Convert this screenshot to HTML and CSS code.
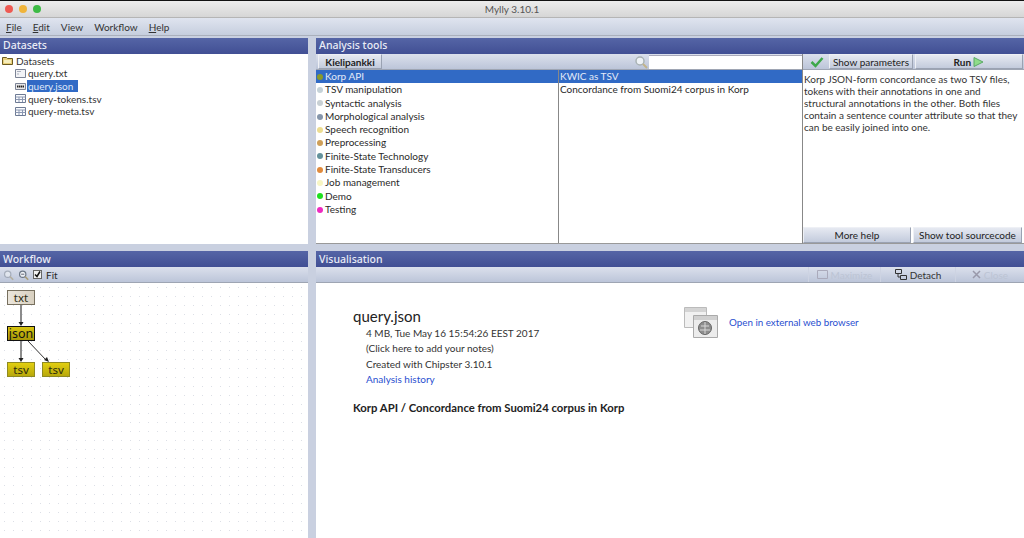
FILE: index.html
```html
<!DOCTYPE html>
<html lang="en">
<head>
    <meta charset="UTF-8">
    <title>Mylly 3.10.1</title>
    <link rel="stylesheet" href="styles.css">
</head>
<body>
    <div class="titlebar">
        <span class="light red"></span>
        <span class="light yellow"></span>
        <span class="light green"></span>
        <div class="wintitle">Mylly 3.10.1</div>
    </div>
    <div class="menubar">
        <span><u>F</u>ile</span>
        <span><u>E</u>dit</span>
        <span>View</span>
        <span>Workflow</span>
        <span><u>H</u>elp</span>
    </div>

    <div class="main">
        <section class="panel">
            <h2>Datasets</h2>
            <div class="tree">
                <div class="tree-root">
                    <svg width="11" height="9" viewBox="0 0 11 9"><path d="M.5 1.500h4l1 1h5v6H.5z" fill="#e8cf7a" stroke="#6b5a20"/><path d="M2 4h7v3H2z" fill="#f6eebd"/></svg>
                    Datasets
                </div>
                <div class="tree-item">
                    <svg class="file" width="11" height="9" viewBox="0 0 11 9"><path d="M.5.500h10v8H.5z" fill="#f2f3f6" stroke="#7c8496"/><path d="M2 2.500h4M2 5h2" stroke="#a9afbd"/></svg>
                    <span>query.txt</span>
                </div>
                <div class="tree-item">
                    <svg class="file" width="11" height="9" viewBox="0 0 11 9"><path d="M.5 1.500h10v6H.5z" fill="#e9e9ea" stroke="#7c8496"/><path d="M2 4.500h7" stroke="#222" stroke-width="2" stroke-dasharray="1.500 .5"/></svg>
                    <span class="picked">query.json</span>
                </div>
                <div class="tree-item">
                    <svg class="file" width="11" height="9" viewBox="0 0 11 9"><path d="M.5.500h10v8H.5z" fill="#fafbfd" stroke="#6d7a94"/><path d="M.5 3h10M.5 5.500h10M4 3v5M7.500 3v5" stroke="#8d99b3"/></svg>
                    <span>query-tokens.tsv</span>
                </div>
                <div class="tree-item">
                    <svg class="file" width="11" height="9" viewBox="0 0 11 9"><path d="M.5.500h10v8H.5z" fill="#fafbfd" stroke="#6d7a94"/><path d="M.5 3h10M.5 5.500h10M4 3v5M7.500 3v5" stroke="#8d99b3"/></svg>
                    <span>query-meta.tsv</span>
                </div>
            </div>
        </section>

        <section class="panel">
            <h2>Analysis tools</h2>
            <div class="tools">
                <div class="tools-left">
                    <div class="toolbar">
                        <button class="btn kieli">Kielipankki</button>
                        <svg class="search" width="14" height="14" viewBox="0 0 14 14"><circle cx="6" cy="6" r="4" fill="#eef2f6" stroke="#a9b2b4" stroke-width="1.500"/><path d="M9 9l4 4" stroke="#c2b48a" stroke-width="2"/></svg>
                        <div class="searchbox"></div>
                    </div>
                    <div class="lists">
                        <ul class="list cats">
                            <li class="active"><i style="background:#8a9a2a"></i>Korp API</li>
                            <li><i style="background:#c5d2d8"></i>TSV manipulation</li>
                            <li><i style="background:#c8d0d4"></i>Syntactic analysis</li>
                            <li><i style="background:#8696ab"></i>Morphological analysis</li>
                            <li><i style="background:#ecdc90"></i>Speech recognition</li>
                            <li><i style="background:#cf9f58"></i>Preprocessing</li>
                            <li><i style="background:#64929c"></i>Finite-State Technology</li>
                            <li><i style="background:#e08a3c"></i>Finite-State Transducers</li>
                            <li><i style="background:#f8f6c4"></i>Job management</li>
                            <li><i style="background:#1ee01e"></i>Demo</li>
                            <li><i style="background:#ee2ac0"></i>Testing</li>
                        </ul>
                        <ul class="list items">
                            <li class="active">KWIC as TSV</li>
                            <li>Concordance from Suomi24 corpus in Korp</li>
                        </ul>
                    </div>
                </div>
                <div class="tools-right">
                    <div class="toolbar">
                        <svg class="check" width="14" height="12" viewBox="0 0 14 12"><path d="M1.500 6l4 4 7-8" fill="none" stroke="#3da84a" stroke-width="2.500"/></svg>
                        <button class="btn params">Show parameters</button>
                        <button class="btn run">Run <svg width="11" height="10" viewBox="0 0 11 10"><path d="M1 .5l9 4.500-9 4.500z" fill="#8fdc8a" stroke="#5aa867"/></svg></button>
                    </div>
                    <p class="desc">Korp JSON-form concordance as two TSV files, tokens with their annotations in one and structural annotations in the other. Both files contain a sentence counter attribute so that they can be easily joined into one.</p>
                    <div class="helpbtns">
                        <button class="btn">More help</button>
                        <button class="btn">Show tool sourcecode</button>
                    </div>
                </div>
            </div>
        </section>

        <section class="panel">
            <h2 class="lower">Workflow</h2>
            <div class="toolbar wf-bar">
                <svg class="faded" width="11" height="12" viewBox="0 0 14 14"><circle cx="6" cy="6" r="4" fill="#eef2f6" stroke="#8a93a0" stroke-width="1.500"/><path d="M9 9l4 4" stroke="#a89c78" stroke-width="2"/></svg>
                <svg width="11" height="12" viewBox="0 0 14 14"><circle cx="6" cy="6" r="4" fill="#eef2f6" stroke="#6b7686" stroke-width="1.500"/><path d="M4 6h4" stroke="#445"/><path d="M9 9l4 4" stroke="#a89c78" stroke-width="2"/></svg>
                <span class="checkbox"><svg width="7" height="7" viewBox="0 0 7 7"><path d="M1 3.500l2 2 3-5" fill="none" stroke="#111" stroke-width="1.500"/></svg></span>
                <span>Fit</span>
            </div>
            <div class="canvas">
                <div class="node raw" style="left:7px;top:7px">txt</div>
                <div class="node sel" style="left:7px;top:43px">json</div>
                <div class="node tsv" style="left:7px;top:79px">tsv</div>
                <div class="node tsv" style="left:42px;top:79px">tsv</div>
                <svg class="edges" width="100" height="100">
                    <path d="M21 22v18M21 58v18" stroke="#666" stroke-width="1.500"/>
                    <path d="M28 58l18 19" stroke="#333"/>
                    <path d="M18.500 39h5L21 43zM18.500 75h5L21 79zM44 77l3-3 2 5z" fill="#222"/>
                </svg>
            </div>
        </section>

        <section class="panel">
            <h2 class="lower">Visualisation</h2>
            <div class="toolbar viz-bar">
                <span class="vbtn off maxi"><svg width="11" height="9" viewBox="0 0 11 9"><path d="M.5.500h10v8H.5z" fill="none" stroke="#aab"/></svg> Maximize</span>
                <span class="vbtn detach"><svg width="12" height="11" viewBox="0 0 12 11"><path d="M.5.500h6v4h-6zM5.500 6.500h6v4h-6zM3 5v3h2" fill="none" stroke="#333"/></svg> Detach</span>
                <span class="vbtn off closer"><svg width="9" height="9" viewBox="0 0 9 9"><path d="M1 1l7 7M8 1l-7 7" stroke="#99a" stroke-width="1.500"/></svg> Close</span>
            </div>
            <div class="viz">
                <div class="viz-info">
                    <h3>query.json</h3>
                    <div class="meta">
                        <div>4 MB, Tue May 16 15:54:26 EEST 2017</div>
                        <div>(Click here to add your notes)</div>
                        <div>Created with Chipster 3.10.1</div>
                        <div><a href="#">Analysis history</a></div>
                    </div>
                    <p class="opname">Korp API / Concordance from Suomi24 corpus in Korp</p>
                </div>
                <div class="viz-open">
                    <svg width="34" height="32" viewBox="0 0 34 32">
                        <path d="M.5 1.500h22v20H.5z" fill="#f1f1f1" stroke="#bbb"/>
                        <path d="M1 2h21v4H1z" fill="#d4d4d4"/>
                        <path d="M9.500 9.500h24v22h-24z" fill="#ececec" stroke="#aaa"/>
                        <path d="M10 10h23v4H10z" fill="#d0d0d0"/>
                        <circle cx="21" cy="22" r="6.500" fill="#8e8e8e" stroke="#666"/>
                        <path d="M17 20h8M16 24h10M21 16v12" stroke="#d8d8d8"/>
                    </svg>
                    <a href="#">Open in external web browser</a>
                </div>
            </div>
        </section>
    </div>
</body>
</html>
```

FILE: styles.css
```css
* {
    box-sizing: border-box;
}
html, body {
    height: 100%;
}
body {
    margin: 0;
    display: flex;
    flex-direction: column;
    overflow: hidden;
    background-color: #c9d0e0;
    font-family: Lato, "Noto Sans", sans-serif;
    font-size: 10px;
    color: #2a2a2a;
}

.titlebar {
    height: 18px;
    flex: none;
    display: flex;
    align-items: center;
    gap: 6px;
    padding-left: 5px;
    position: relative;
    border-top: 1px solid #111;
    border-bottom: 1px solid #b5b5b5;
    background: linear-gradient(#ececec, #d6d6d6);
}
.light {
    width: 8px;
    height: 8px;
    border-radius: 50%;
}
.red { background-color: #ee5a52; }
.yellow { background-color: #f0b43a; }
.green { background-color: #3dbb45; }
.wintitle {
    position: absolute;
    left: 0;
    right: 0;
    text-align: center;
    font-size: 10px;
    color: #555;
}

.menubar {
    height: 18px;
    flex: none;
    display: flex;
    align-items: center;
    gap: 11px;
    padding-left: 6px;
    background: linear-gradient(#dfe4ef, #c6cede);
    border-bottom: 1px solid #aab0bc;
    color: #333;
}

.main {
    flex: 1;
    min-height: 0;
    display: grid;
    grid-template-columns: 308px 1fr;
    grid-template-rows: 206px 1fr;
    column-gap: 8px;
    row-gap: 7px;
    padding-top: 2px;
}

.panel {
    display: flex;
    flex-direction: column;
    min-width: 0;
    min-height: 0;
    background-color: #fff;
}
.panel h2 {
    margin: 0;
    height: 16px;
    flex: none;
    padding-left: 3px;
    font: 500 10.500px/15px "Noto Sans", sans-serif;
    color: #e9ecf6;
    background: linear-gradient(#5565a6, #414f94);
}
.panel h2.lower {
    line-height: 17px;
}

.tree {
    padding-left: 2px;
    color: #333;
}
.tree-root {
    display: flex;
    align-items: center;
    gap: 3px;
    height: 13px;
}
.tree-item {
    display: flex;
    align-items: center;
    gap: 1px;
    height: 12.700px;
    padding-left: 13px;
}
.tree-item span {
    padding: 0 1px;
}
.picked {
    background-color: #316ac5;
    color: #dfe8f8;
    padding-right: 5px !important;
}

.toolbar {
    height: 16px;
    flex: none;
    display: flex;
    align-items: center;
    background: linear-gradient(#dbe0ec, #bcc5d9);
    border-bottom: 1px solid #9ea5b3;
}
.btn {
    height: 15px;
    padding: 0;
    border: 1px solid #a5acbc;
    border-color: #eef0f5 #9aa2b2 #9aa2b2 #eef0f5;
    background: linear-gradient(#e6e9f1, #c3cbdc);
    font: inherit;
    color: #222;
}

.tools {
    flex: 1;
    min-height: 0;
    display: flex;
}
.tools-left {
    width: 486px;
    flex: none;
    display: flex;
    flex-direction: column;
}
.kieli {
    width: 64px;
    margin-left: 2px;
    font-weight: 700;
}
.search {
    margin-left: auto;
    margin-right: 1px;
}
.searchbox {
    width: 153px;
    height: 14px;
    background-color: #fff;
    border-top: 1px solid #aab;
}
.lists {
    flex: 1;
    display: flex;
    border-bottom: 1px solid #999;
}
.list {
    list-style: none;
    margin: 0;
    padding: 0;
    min-width: 0;
}
.list li {
    height: 13.300px;
    line-height: 13.300px;
    white-space: nowrap;
}
.list .active {
    background-color: #316ac5;
    color: #e4ebf8;
}
.cats {
    width: 243px;
    flex: none;
    border-right: 1px solid #888;
}
.cats li {
    display: flex;
    align-items: center;
    gap: 2px;
}
.cats i {
    width: 6px;
    height: 6px;
    margin-left: 1px;
    border-radius: 50%;
}
.items {
    flex: 1;
}
.items li {
    padding-left: 1px;
}

.tools-right {
    flex: 1;
    min-width: 0;
    display: flex;
    flex-direction: column;
    border-left: 1px solid #888;
    border-bottom: 1px solid #999;
}
.check {
    margin: 0 5px 0 7px;
}
.params {
    width: 84px;
}
.run {
    width: 108px;
    margin-left: 2px;
    font-weight: 700;
}
.run svg {
    vertical-align: -1px;
}
.desc {
    flex: 1;
    margin: 0;
    padding: 3px 4px 0 1px;
    line-height: 12.100px;
    color: #333;
}
.helpbtns {
    display: flex;
    gap: 2px;
    height: 16px;
    padding-right: 2px;
}
.helpbtns .btn {
    height: 16px;
    flex: 1 1 0;
}
.helpbtns .btn:last-child {
    flex: none;
    width: 109px;
}

.wf-bar {
    gap: 4px;
    padding-left: 3px;
}
.faded {
    opacity: .6;
}
.checkbox {
    width: 9px;
    height: 9px;
    display: flex;
    align-items: center;
    justify-content: center;
    background-color: #f2f2f2;
    border: 1px solid #666;
}
.canvas {
    flex: 1;
    position: relative;
    background-color: #fff;
    background-image: radial-gradient(#dcdfe6 .6px, transparent .8px);
    background-size: 9px 9px;
}
.edges {
    position: absolute;
    left: 0;
    top: 0;
}
.node {
    position: absolute;
    width: 28px;
    height: 15px;
    text-align: center;
    font: 11.500px/14px "Noto Sans", sans-serif;
    color: #2b2b10;
    border: 1px solid #555;
}
.raw {
    background: linear-gradient(90deg, #ebe6dc, #d8d0c0);
    border-color: #77705f;
}
.tsv {
    background: linear-gradient(#e2cf10, #b8a80c);
    border-color: #8f8a22;
}
.sel {
    background: linear-gradient(#d8c410, #a89808);
    border: 1px solid #111;
    font-size: 12.500px;
    color: #111;
}

.viz-bar {
    justify-content: flex-end;
}
.vbtn {
    display: flex;
    align-items: center;
    justify-content: center;
    gap: 3px;
    height: 100%;
    border-left: 1px solid #cdd3e2;
    color: #333;
}
.vbtn.off {
    color: #bcc4d4;
}
.maxi { width: 72px; }
.detach { width: 75px; }
.closer { width: 69px; }
.viz {
    flex: 1;
    display: flex;
    padding: 24px 0 0 37px;
}
.viz-info {
    width: 331px;
    flex: none;
}
.viz-info h3 {
    margin: 0;
    font: 400 15px/18px Lato, sans-serif;
    color: #222;
}
.meta {
    margin-top: 1px;
    padding-left: 13px;
    font: 10px/15.300px Lato, sans-serif;
    color: #333;
}
a {
    color: #2a4fd0;
    text-decoration: none;
}
.opname {
    margin: 13px 0 0;
    font: 700 11.300px/15px Lato, sans-serif;
    color: #222;
}
.viz-open {
    display: flex;
    align-items: center;
    gap: 11px;
    height: 32px;
    margin-top: -1px;
    font: 9.800px Lato, sans-serif;
}
```
